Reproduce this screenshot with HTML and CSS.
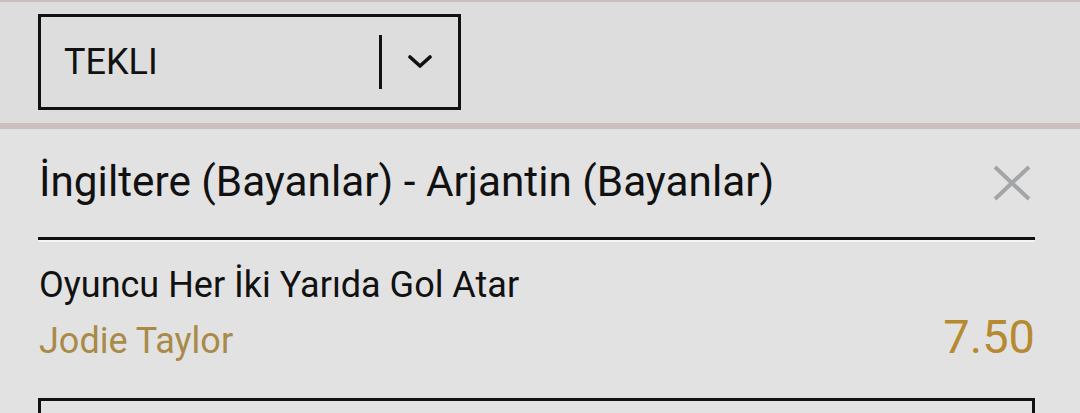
FILE: index.html
```html
<!DOCTYPE html>
<html>
<head>
<meta charset="utf-8">
<title>Kupon</title>
<link rel="stylesheet" href="styles.css">
</head>
<body>
  <div class="head">
    <div class="select">
      <span class="select-label">TEKLI</span>
      <span class="select-sep"></span>
      <svg class="chevron" width="24" height="16" viewBox="0 0 24 16">
        <path d="M2 3 L12 12 L22 3" fill="none" stroke="#111" stroke-width="3.6" stroke-linecap="round" stroke-linejoin="round"/>
      </svg>
    </div>
  </div>

  <div class="bet">
    <div class="match">
      <span class="match-name">İngiltere (Bayanlar) - Arjantin (Bayanlar)</span>
      <svg class="close" width="38" height="36" viewBox="0 0 38 36">
        <path d="M2 2 L36 34 M36 2 L2 34" stroke="#a2a6a8" stroke-width="4"/>
      </svg>
    </div>
    <div class="market">Oyuncu Her İki Yarıda Gol Atar</div>
    <div class="pick">
      <span class="pick-name">Jodie Taylor</span>
      <span class="odds">7.50</span>
    </div>
    <div class="stake"></div>
  </div>
</body>
</html>
```

FILE: styles.css
```css
body {
  margin: 0;
  background-color: #e2e2e2;
  font-family: Roboto, "Liberation Sans", sans-serif;
  color: #111;
  overflow: hidden;
}
.head {
  background-color: #dddddd;
  border-top: 2px solid #c9bfbd;
  border-bottom: 6px solid #cbc1be;
  padding: 12px 0 13px 38px;
}
.select {
  box-sizing: border-box;
  width: 423px;
  height: 96px;
  border: 3px solid #111;
  display: flex;
  align-items: center;
  padding-left: 23px;
}
.select-label {
  font-size: 36px;
  flex: 1;
}
.select-sep {
  width: 3px;
  height: 54px;
  background-color: #111;
  margin-right: 26px;
}
.chevron {
  margin-right: 26px;
}
.bet {
  padding: 0 45px 0 38px;
}
.match {
  display: flex;
  align-items: center;
  justify-content: space-between;
  height: 108px;
  border-bottom: 3px solid #111;
  box-shadow: 0 2px 0 #f4f4f4;
}
.match-name {
  font-size: 42.3px;
  padding-left: 1px;
  padding-bottom: 4px;
}
.close {
  margin-right: 4px;
}
.market {
  font-size: 36px;
  margin-top: 23px;
  line-height: 44px;
  padding-left: 1px;
}
.pick {
  display: flex;
  justify-content: space-between;
  align-items: baseline;
  line-height: 48px;
  margin-top: 6px;
}
.pick-name {
  font-size: 36px;
  color: #a98a48;
  padding-left: 1px;
}
.odds {
  font-size: 47px;
  color: #b68a30;
}
.stake {
  margin-top: 33px;
  height: 60px;
  border: 3px solid #111;
}
```
